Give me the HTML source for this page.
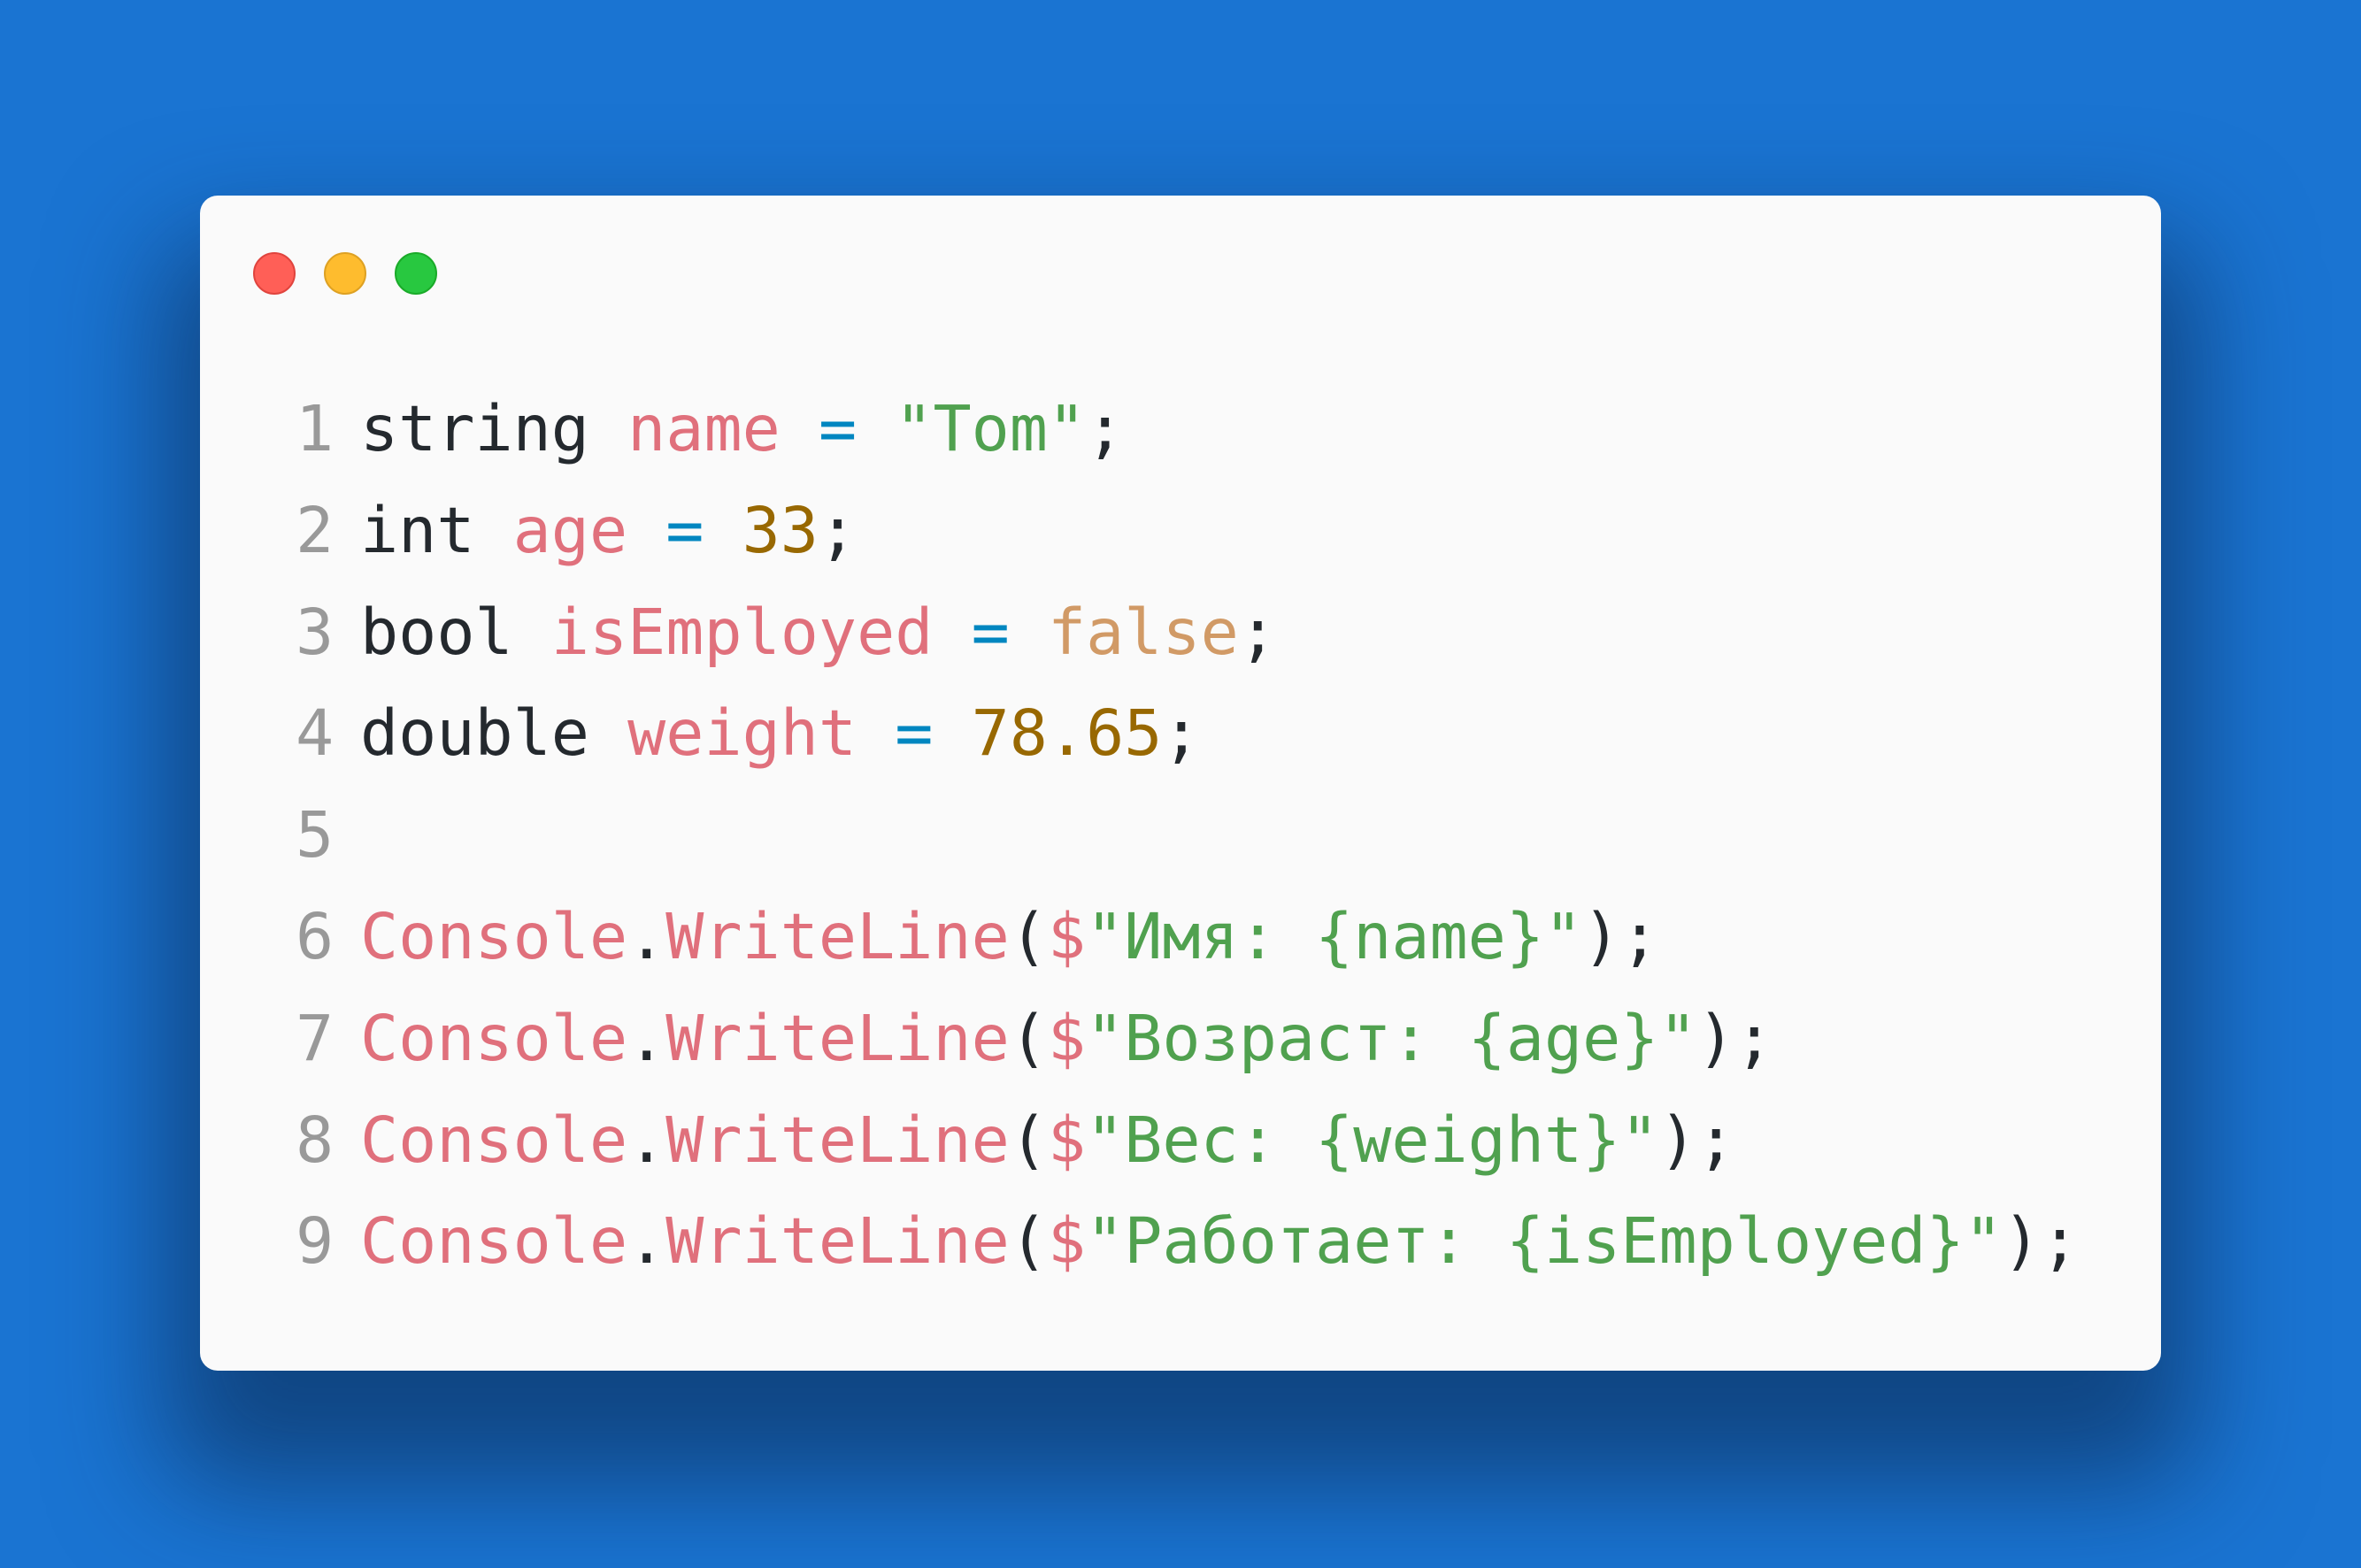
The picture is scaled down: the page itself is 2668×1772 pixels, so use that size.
<!DOCTYPE html>
<html><head><meta charset="utf-8"><style>
html,body{margin:0;padding:0}
body{width:2668px;height:1772px;background:#1a74d2;position:relative;overflow:hidden}
.card{position:absolute;left:226px;top:221px;width:2216px;height:1328px;background:#fafafa;border-radius:20px;box-shadow:0 90px 160px 40px rgba(10,40,80,0.6)}
.dot{position:absolute;top:285px;width:48px;height:48px;border-radius:50%;box-sizing:border-box}
.code{position:absolute;left:0;top:427px;font-family:"DejaVu Sans Mono","Liberation Mono",monospace;font-size:71.7px;line-height:114.8px;color:#24292e}
.row{position:relative;height:114.8px;white-space:pre}
.ln{position:absolute;left:334px;width:43px;color:#999}
.tx{position:absolute;left:407px}
.k{color:#24292e}.v{color:#e0707c}.o{color:#0086c0}.s{color:#50a14f}.n{color:#986801}.b{color:#d19a66}
</style></head><body>
<div class="card"></div>
<div class="dot" style="left:286px;background:#ff5f57;border:2px solid #e0443e"></div>
<div class="dot" style="left:366px;background:#febc2e;border:2px solid #dea123"></div>
<div class="dot" style="left:446px;background:#28c840;border:2px solid #1aab29"></div>
<div class="code">
<div class="row"><span class="ln">1</span><span class="tx">string <span class="v">name</span> <span class="o">=</span> <span class="s">"Tom"</span>;</span></div>
<div class="row"><span class="ln">2</span><span class="tx">int <span class="v">age</span> <span class="o">=</span> <span class="n">33</span>;</span></div>
<div class="row"><span class="ln">3</span><span class="tx">bool <span class="v">isEmployed</span> <span class="o">=</span> <span class="b">false</span>;</span></div>
<div class="row"><span class="ln">4</span><span class="tx">double <span class="v">weight</span> <span class="o">=</span> <span class="n">78.65</span>;</span></div>
<div class="row"><span class="ln">5</span></div>
<div class="row"><span class="ln">6</span><span class="tx"><span class="v">Console</span>.<span class="v">WriteLine</span>(<span class="v">$</span><span class="s">"Имя: {name}"</span>);</span></div>
<div class="row"><span class="ln">7</span><span class="tx"><span class="v">Console</span>.<span class="v">WriteLine</span>(<span class="v">$</span><span class="s">"Возраст: {age}"</span>);</span></div>
<div class="row"><span class="ln">8</span><span class="tx"><span class="v">Console</span>.<span class="v">WriteLine</span>(<span class="v">$</span><span class="s">"Вес: {weight}"</span>);</span></div>
<div class="row"><span class="ln">9</span><span class="tx"><span class="v">Console</span>.<span class="v">WriteLine</span>(<span class="v">$</span><span class="s">"Работает: {isEmployed}"</span>);</span></div>
</div>
</body></html>
